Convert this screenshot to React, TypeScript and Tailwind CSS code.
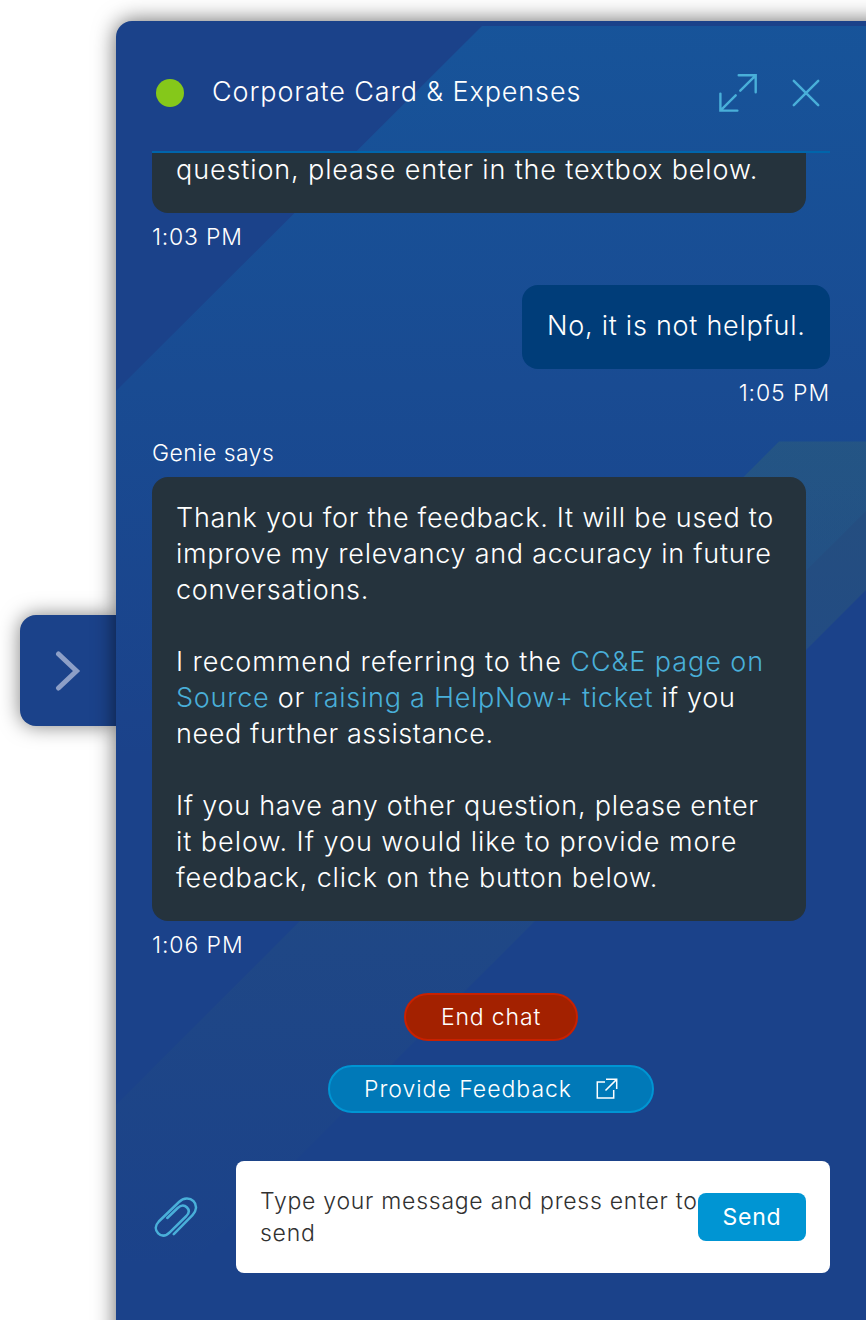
import type { ReactNode } from "react";

function Line({ children, className }: { children: ReactNode; className: string }) {
  return <span className={`block h-9 whitespace-pre ${className}`}>{children}</span>;
}

function Stamp({ children, className }: { children: ReactNode; className: string }) {
  return <div className={`h-6 whitespace-pre text-[23px] leading-6 ${className}`}>{children}</div>;
}

function Backdrop() {
  return (
    <svg className="absolute inset-0" width="750" height="1300" viewBox="116 21 750 1300" aria-hidden="true">
      <defs>
        <linearGradient id="sky" gradientUnits="userSpaceOnUse" x1="0" y1="26" x2="0" y2="760">
          <stop offset="0" stopColor="#0c86c6" stopOpacity="0.26" />
          <stop offset="1" stopColor="#0c86c6" stopOpacity="0" />
        </linearGradient>
        <linearGradient id="moss" gradientUnits="userSpaceOnUse" x1="0" y1="442" x2="0" y2="1270">
          <stop offset="0" stopColor="#45785e" stopOpacity="0.24" />
          <stop offset="1" stopColor="#45785e" stopOpacity="0" />
        </linearGradient>
      </defs>
      <path d="M482 26H866V511L616 760H116V391Z" fill="url(#sky)" />
      <path d="M779 441.500H866V590L186 1270H116V1105Z" fill="url(#moss)" />
    </svg>
  );
}

function Header() {
  return (
    <header className="flex h-[132px] items-center border-b-2 border-[#0065ab] pl-1 pt-3.5">
      <span className="size-7 rounded-full bg-[#85c81a]" />
      <h1 className="ml-7 grow whitespace-pre pb-0.5 text-[27px] leading-9 tracking-[0.880px]">Corporate Card &amp; Expenses</h1>
      <svg width="40" height="40" viewBox="0 0 40 40" className="mr-[33px]" fill="none" stroke="#49afd9" strokeWidth="2.400" strokeLinecap="round">
        <path d="M19.700 2.300H36.700V19.300M36.700 2.300L21.300 17.700M1.400 20.600V37.600H18.400M1.400 37.600L16.700 22.300" />
      </svg>
      <svg width="28" height="28" viewBox="0 0 28 28" className="mr-[10px]" fill="none" stroke="#49afd9" strokeWidth="2.500" strokeLinecap="round">
        <path d="M1.800 1.800L26.200 26.200M26.200 1.800L1.800 26.200" />
      </svg>
    </header>
  );
}

function Messages() {
  return (
    <main className="flex flex-col">
      <div className="h-[60px] w-[654px] overflow-hidden rounded-b-[16px] bg-[#25333d] px-6 text-[27px]">
        <Line className="leading-[33px] tracking-[0.880px]">question, please enter in the textbox below.</Line>
      </div>
      <Stamp className="mt-3 tracking-[0.780px]">1:03 PM</Stamp>
      <div className="mt-9 w-[308px] self-end rounded-[16px] bg-[#003d79] px-[25px] pb-[25px] pt-[23px] text-[27px] leading-9">
        <Line className="tracking-[0.740px]">No, it is not helpful.</Line>
      </div>
      <Stamp className="mt-3 self-end tracking-[0.900px]">1:05 PM</Stamp>
      <Stamp className="mt-9 tracking-[0.430px]">Genie says</Stamp>
      <div className="mt-3 w-[654px] rounded-[16px] bg-[#25333d] px-6 pb-[25px] pt-[23px] text-[27px] leading-9">
        <Line className="tracking-[0.710px]">Thank you for the feedback. It will be used to</Line>
        <Line className="tracking-[0.730px]">improve my relevancy and accuracy in future</Line>
        <Line className="mb-9 tracking-[0.720px]">conversations.</Line>
        <Line className="tracking-[0.940px]">
          I recommend referring to the <a className="text-[#49afd9]">CC&amp;E page on</a>
        </Line>
        <Line className="tracking-[0.740px]">
          <a className="text-[#49afd9]">Source</a> or <a className="text-[#49afd9]">raising a HelpNow+ ticket</a> if you
        </Line>
        <Line className="mb-9 tracking-[0.590px]">need further assistance.</Line>
        <Line className="tracking-[0.740px]">If you have any other question, please enter</Line>
        <Line className="tracking-[0.970px]">it below. If you would like to provide more</Line>
        <Line className="tracking-[0.850px]">feedback, click on the button below.</Line>
      </div>
      <Stamp className="mt-3 tracking-[0.900px]">1:06 PM</Stamp>
    </main>
  );
}

function Actions() {
  return (
    <div className="mt-9 flex flex-col items-center gap-6 text-[23px]">
      <button className="h-12 w-[174px] whitespace-pre rounded-full border-2 border-[#c92100] bg-[#a32100] pt-px tracking-[0.850px]">End chat</button>
      <button className="flex h-12 w-[326px] items-center whitespace-pre rounded-full border-2 border-[#0095d3] bg-[#0079b8] pl-[34px]">
        <span className="w-[232px] pt-px text-left tracking-[0.990px]">Provide Feedback</span>
        <svg width="22" height="22" viewBox="0 0 22 22" fill="none" stroke="white" strokeWidth="1.500">
          <path d="M9 4H1.300V20H17.700V12M10 1.300H20.700V11M20.400 1.600L9.500 12.500" />
        </svg>
      </button>
    </div>
  );
}

function Composer() {
  return (
    <footer className="mt-12 flex items-center">
      <svg width="46" height="42" viewBox="0 0 46 42" className="ml-[1px] mr-[37px]" fill="none" stroke="#49afd9" strokeWidth="2.500" strokeLinecap="round" strokeLinejoin="round">
        <path d="M14.300 22L24.700 12C28 9 31.500 9 34 11.500C36.500 14 36.100 17.200 33.400 20L17 36.200C13 40.200 8.600 40.600 5.200 37.300C1.800 34 2 29.500 5.800 25.500L26 6C30.800 1.400 36.900 1.600 40.500 5.200C44.200 8.900 43.700 14.900 39.500 19.200L20.800 38.200" />
      </svg>
      <div className="flex h-28 w-[594px] items-center rounded-[8px] bg-white pl-6 text-[23px] leading-8 text-[#313131]">
        <p className="w-[438px] whitespace-pre pb-px tracking-[0.740px]">
          <span className="block">Type your message and press enter to</span>
          <span className="block">send</span>
        </p>
        <button className="h-12 w-[108px] rounded-[8px] bg-[#0095d3] pb-px font-normal tracking-[0.800px] text-white">Send</button>
      </div>
    </footer>
  );
}

export default function App() {
  return (
    <div className="flex h-[1320px] w-[866px] items-start overflow-hidden bg-white font-['Inter',sans-serif] font-[350] text-white">
      <button className="ml-5 mt-[615px] flex h-[111px] w-24 shrink-0 items-center rounded-l-[16px] bg-[#1b428a] pl-[35px] shadow-[0_0_20px_rgba(0,0,0,0.5)]">
        <svg width="26" height="40" viewBox="0 0 26 40" fill="none" stroke="#8d9fc7" strokeWidth="5" strokeLinecap="round">
          <path d="M3.500 3L21.500 20L3.500 37" />
        </svg>
      </button>
      <div className="relative mt-[21px] h-[1400px] w-[800px] shrink-0 rounded-l-[16px] bg-[#1b428a] shadow-[0_0_22px_rgba(0,0,0,0.6)]">
        <Backdrop />
        <div className="relative ml-9 w-[678px]">
          <Header />
          <Messages />
          <Actions />
          <Composer />
        </div>
      </div>
    </div>
  );
}
